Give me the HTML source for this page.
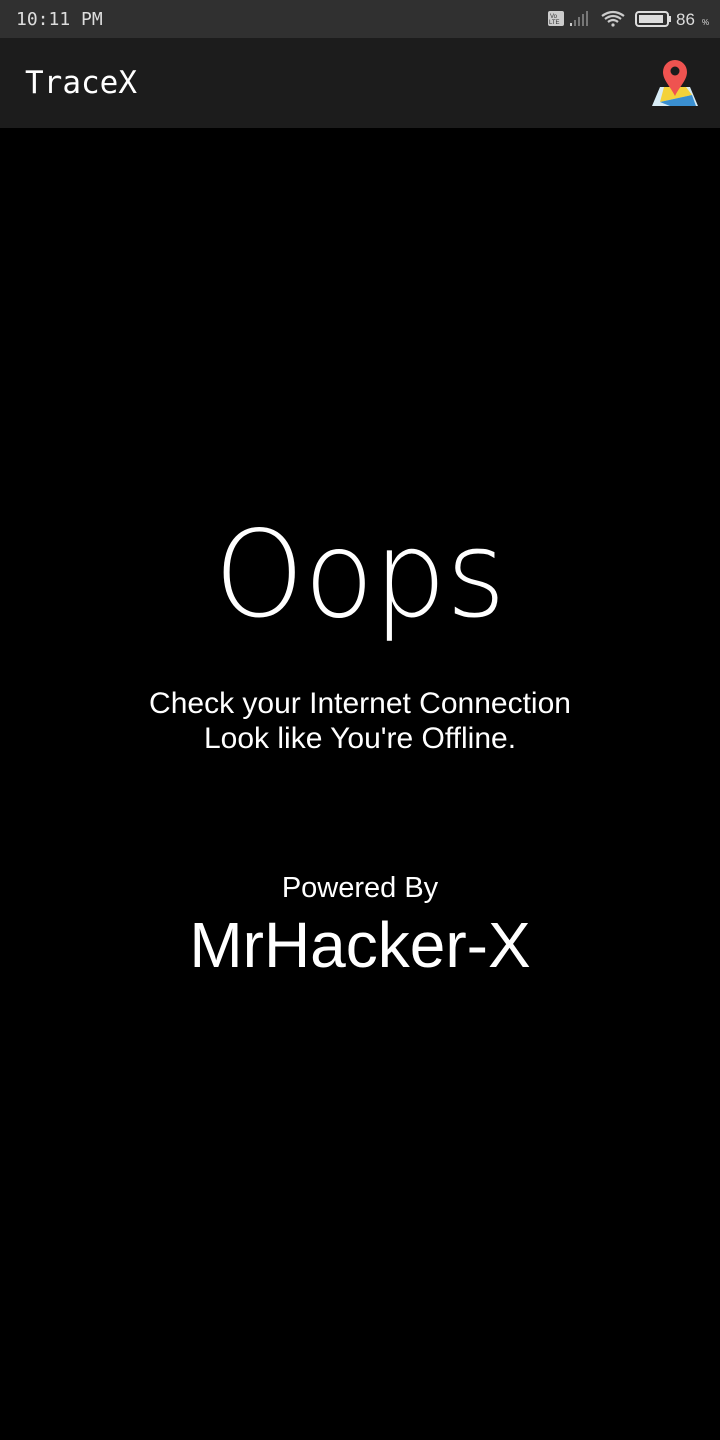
<!DOCTYPE html>
<html><head><meta charset="utf-8"><style>
html,body{margin:0;padding:0;width:720px;height:1440px;background:#000;overflow:hidden;font-family:"Liberation Sans",sans-serif;color:#fff}
.sb{position:absolute;top:0;left:0;width:720px;height:38px;background:#303030}
.ab{position:absolute;top:38px;left:0;width:720px;height:90px;background:#1c1c1c}
.t{position:absolute;left:25px;top:27px;font-family:"DejaVu Sans Mono","Liberation Mono",monospace;font-size:31px}
.c{position:absolute;left:0;width:720px;text-align:center}
</style></head><body>
<div class="sb">
<div style="position:absolute;left:16px;top:9px;font-family:'DejaVu Sans Mono',monospace;font-size:18px;color:#ddd">10:11 PM</div>
<svg style="position:absolute;left:546px;top:9px" width="170" height="20">
<rect x="2" y="2" width="16" height="15" rx="2" fill="#ccc"/>
<text x="4" y="9" font-size="6" fill="#333" font-family="Liberation Sans">Vo</text>
<text x="3" y="15" font-size="6" fill="#333" font-family="Liberation Sans">LTE</text>
<rect x="24" y="14" width="2" height="3" fill="#ccc"/><rect x="28" y="11" width="2" height="6" fill="#777"/><rect x="32" y="8" width="2" height="9" fill="#777"/><rect x="36" y="5" width="2" height="12" fill="#777"/><rect x="40" y="2" width="2" height="15" fill="#777"/>
<path d="M56 7 Q67 -1 78 7 M59 10 Q67 4 75 10 M62 13 Q67 9 72 13" stroke="#ccc" stroke-width="2.2" fill="none"/><circle cx="67" cy="16" r="1.6" fill="#ccc"/>
<rect x="90" y="3" width="32" height="14" rx="3" fill="none" stroke="#ddd" stroke-width="2"/><rect x="93" y="6" width="24" height="8" fill="#ddd"/><rect x="123" y="7" width="2" height="6" fill="#ddd"/>
<text x="130" y="16" font-size="17" fill="#ddd" font-family="Liberation Sans">86</text><text x="156" y="16" font-size="8" fill="#ddd">%</text>
</svg></div>
<div class="ab"><div class="t">TraceX</div>
<svg style="position:absolute;left:650px;top:20px" width="50" height="50">
<polygon points="10,29 40,29 48,48 2,48" fill="#d8ecf5"/>
<polygon points="14,29 36,29 42,37 10,44" fill="#f4d23a"/>
<polygon points="10,44 42,37 46,48 20,48" fill="#3a8fd0"/>
<path d="M25 38 C20 28 13 22 13 14 A12 12 0 0 1 37 14 C37 22 30 28 25 38Z" fill="#ef5350"/>
<circle cx="25" cy="13" r="4.5" fill="#1c1c1c"/>
</svg></div>
<div class="c" style="top:500px;font-family:'DejaVu Sans',sans-serif;font-weight:200;font-size:114px;line-height:150px;transform:scaleY(1.05);transform-origin:50% 50%">Oops</div>
<div class="c" style="top:686px;font-size:30px;line-height:35px">Check your Internet Connection<br>Look like You're Offline.</div>
<div class="c" style="top:872px;font-size:29px">Powered By</div>
<div class="c" style="top:908px;font-size:64px">MrHacker-X</div>
</body></html>
